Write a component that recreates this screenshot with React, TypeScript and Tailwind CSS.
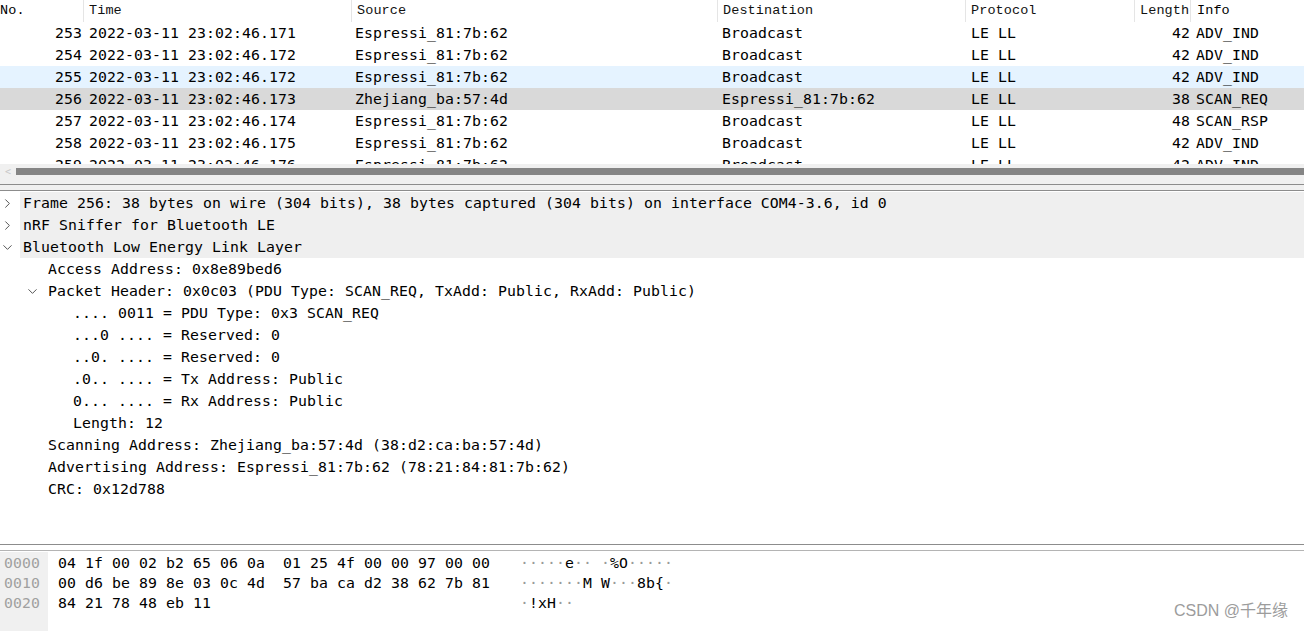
import { ChevronDown, ChevronRight } from "lucide-react"

const mono = { fontFamily: '"DejaVu Sans Mono", "Liberation Mono", monospace' }

const packets = [
    { no: 253, time: "2022-03-11 23:02:46.171", src: "Espressi_81:7b:62", dst: "Broadcast", proto: "LE LL", len: 42, info: "ADV_IND", tone: "" },
    { no: 254, time: "2022-03-11 23:02:46.172", src: "Espressi_81:7b:62", dst: "Broadcast", proto: "LE LL", len: 42, info: "ADV_IND", tone: "" },
    { no: 255, time: "2022-03-11 23:02:46.172", src: "Espressi_81:7b:62", dst: "Broadcast", proto: "LE LL", len: 42, info: "ADV_IND", tone: "bg-[#e5f3ff]" },
    { no: 256, time: "2022-03-11 23:02:46.173", src: "Zhejiang_ba:57:4d", dst: "Espressi_81:7b:62", proto: "LE LL", len: 38, info: "SCAN_REQ", tone: "bg-[#d9d9d9]" },
    { no: 257, time: "2022-03-11 23:02:46.174", src: "Espressi_81:7b:62", dst: "Broadcast", proto: "LE LL", len: 48, info: "SCAN_RSP", tone: "" },
    { no: 258, time: "2022-03-11 23:02:46.175", src: "Espressi_81:7b:62", dst: "Broadcast", proto: "LE LL", len: 42, info: "ADV_IND", tone: "" },
    { no: 259, time: "2022-03-11 23:02:46.176", src: "Espressi_81:7b:62", dst: "Broadcast", proto: "LE LL", len: 42, info: "ADV_IND", tone: "" },
]

const cols = "grid grid-cols-[84px_268px_366px_248px_169px_56px_1fr]"

// level, expander (none / open / closed), text
const tree: [number, string, string][] = [
    [0, "closed", "Frame 256: 38 bytes on wire (304 bits), 38 bytes captured (304 bits) on interface COM4-3.6, id 0"],
    [0, "closed", "nRF Sniffer for Bluetooth LE"],
    [0, "open", "Bluetooth Low Energy Link Layer"],
    [1, "", "Access Address: 0x8e89bed6"],
    [1, "open", "Packet Header: 0x0c03 (PDU Type: SCAN_REQ, TxAdd: Public, RxAdd: Public)"],
    [2, "", ".... 0011 = PDU Type: 0x3 SCAN_REQ"],
    [2, "", "...0 .... = Reserved: 0"],
    [2, "", "..0. .... = Reserved: 0"],
    [2, "", ".0.. .... = Tx Address: Public"],
    [2, "", "0... .... = Rx Address: Public"],
    [2, "", "Length: 12"],
    [1, "", "Scanning Address: Zhejiang_ba:57:4d (38:d2:ca:ba:57:4d)"],
    [1, "", "Advertising Address: Espressi_81:7b:62 (78:21:84:81:7b:62)"],
    [1, "", "CRC: 0x12d788"],
]

const hexRows: [string, string, string][] = [
    ["0000", "04 1f 00 02 b2 65 06 0a  01 25 4f 00 00 97 00 00", "·····e·· ·%O·····"],
    ["0010", "00 d6 be 89 8e 03 0c 4d  57 ba ca d2 38 62 7b 81", "·······M W···8b{·"],
    ["0020", "84 21 78 48 eb 11", "·!xH··"],
]

const Ascii = ({ text }: { text: string }) => (
    <span>
        {text.split("").map((c, i) => (
            <span key={i} className={c === "·" ? "text-[#9a9a9a]" : "text-black"}>{c}</span>
        ))}
    </span>
)

const HeaderCell = ({ label }: { label: string }) => (
    <div className="h-[22px] leading-[22px] border-r border-[#e5e5e5] text-[13.5px] text-[#111] pl-[5px]" style={{ fontFamily: '"Liberation Mono", monospace' }}>
        {label}
    </div>
)

const App = () => {
    return (
        <main className="w-[1304px] h-[631px] overflow-hidden bg-white flex flex-col text-[14.8px] tracking-[0.09px] text-black" style={mono}>
            {/* packet list */}
            <section className="h-[164px] overflow-hidden shrink-0">
                <div className={cols}>
                    <div className="h-[22px] leading-[22px] border-r border-[#e5e5e5] text-[13.5px]" style={{ fontFamily: '"Liberation Mono", monospace' }}>No.</div>
                    <HeaderCell label="Time" />
                    <HeaderCell label="Source" />
                    <HeaderCell label="Destination" />
                    <HeaderCell label="Protocol" />
                    <HeaderCell label="Length" />
                    <div className="h-[22px] leading-[22px] pl-[6px] text-[13.5px]" style={{ fontFamily: '"Liberation Mono", monospace' }}>Info</div>
                </div>
                {packets.map((p) => (
                    <div key={p.no} className={`${cols} h-[22px] leading-[22px] whitespace-pre ${p.tone}`}>
                        <div className="text-right pr-[2px]">{p.no}</div>
                        <div className="pl-[5px]">{p.time}</div>
                        <div className="pl-[3px]">{p.src}</div>
                        <div className="pl-[4px]">{p.dst}</div>
                        <div className="pl-[5px]">{p.proto}</div>
                        <div className="text-right pr-[1px]">{p.len}</div>
                        <div className="pl-[5px]">{p.info}</div>
                    </div>
                ))}
            </section>

            {/* horizontal scrollbar */}
            <div className="h-[15px] shrink-0 bg-[#f0f0f0] flex items-center">
                <span className="w-[16px] text-[10px] text-[#c8c8c8] text-center leading-none">&lt;</span>
                <div className="flex-1 h-[7px] bg-[#858585]" />
            </div>

            {/* splitter */}
            <div className="h-[12px] shrink-0 bg-[#f0f0f0] flex flex-col pt-[5px] gap-[5px]">
                <div className="h-px bg-[#8c8c8c]" />
                <div className="h-px bg-[#8c8c8c]" />
            </div>

            {/* packet details */}
            <section className="flex-1 pt-[1px] overflow-hidden">
                {tree.map(([level, exp, text], i) => (
                    <div key={i} className="flex h-[22px] leading-[22px] whitespace-pre">
                        <div className="flex items-center shrink-0" style={{ width: level * 25 + 20 }}>
                            <div className="flex justify-end items-center" style={{ width: level * 25 + 15 }}>
                                {exp === "closed" && <ChevronRight size={15} strokeWidth={1.6} className="text-[#555]" />}
                                {exp === "open" && <ChevronDown size={15} strokeWidth={1.6} className="text-[#555]" />}
                            </div>
                        </div>
                        <div className={`flex-1 pl-[3px] ${level === 0 ? "bg-[#efefef]" : ""}`}>{text}</div>
                    </div>
                ))}
            </section>

            {/* splitter */}
            <div className="h-[8px] shrink-0 bg-white flex flex-col gap-[5px]">
                <div className="h-px bg-[#8c8c8c]" />
                <div className="h-px bg-[#b4b4b4]" />
            </div>

            {/* bytes */}
            <section className="h-[79px] shrink-0 flex relative">
                <div className="w-[48px] bg-[#f0f0f0] pt-[1px]">
                    {hexRows.map(([off]) => (
                        <div key={off} className="h-[20px] leading-[20px] pl-[4px] text-[#a0a0a0]">{off}</div>
                    ))}
                </div>
                <div className="flex-1 pt-[1px] pl-[10px]">
                    {hexRows.map(([off, hex, ascii]) => (
                        <div key={off} className="h-[20px] leading-[20px] whitespace-pre flex">
                            <span className="w-[462px]">{hex}</span>
                            <Ascii text={ascii} />
                        </div>
                    ))}
                </div>
                <span
                    className="absolute right-[16px] bottom-[8px] text-[16px] tracking-normal text-[#9c9c9c]"
                    style={{ fontFamily: '"Liberation Sans", "Noto Sans CJK SC", sans-serif' }}
                >
                    CSDN @千年缘
                </span>
            </section>
        </main>
    )
}

export default App
